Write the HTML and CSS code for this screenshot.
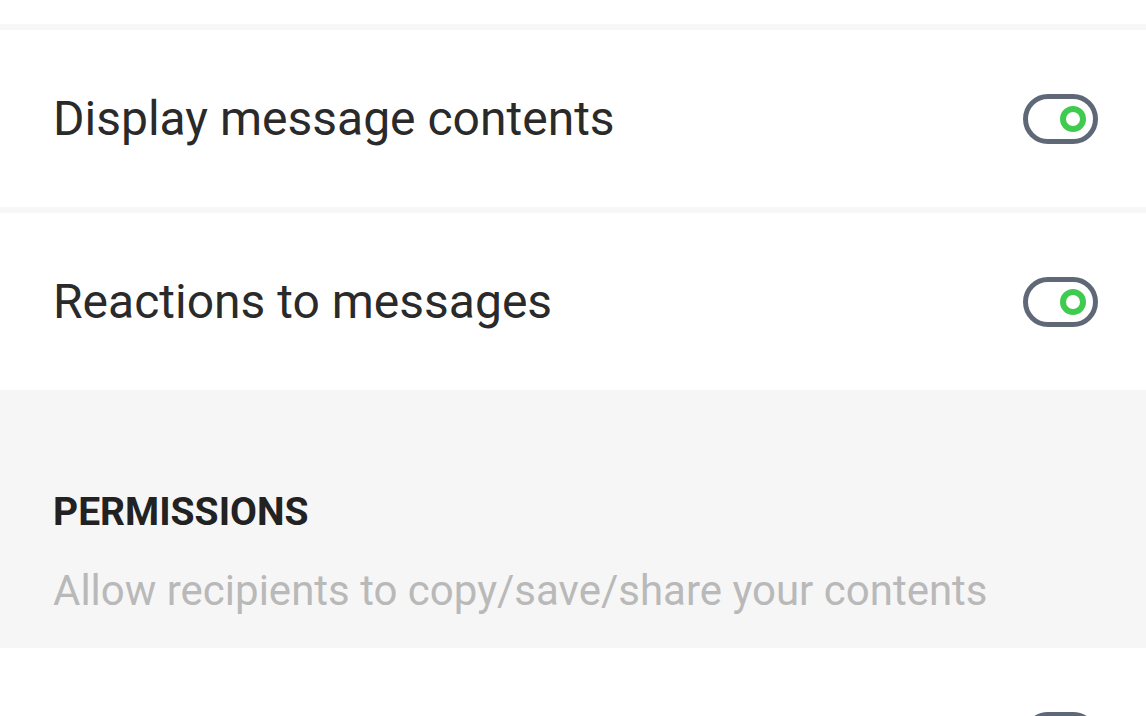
FILE: index.html
```html
<!DOCTYPE html>
<html lang="en">
<head>
  <meta charset="UTF-8">
  <meta name="viewport" content="width=device-width, initial-scale=1.0">
  <title>Notification settings</title>
  <link rel="stylesheet" href="styles.css">
</head>
<body>
  <div class="settings">
    <div class="row row-cut"></div>
    <div class="divider"></div>
    <div class="row">
      <span class="label">Display message contents</span>
      <span class="toggle on"></span>
    </div>
    <div class="divider"></div>
    <div class="row">
      <span class="label">Reactions to messages</span>
      <span class="toggle on"></span>
    </div>
    <div class="section">
      <div class="section-title">PERMISSIONS</div>
      <div class="section-sub">Allow recipients to copy/save/share your contents</div>
    </div>
    <div class="row">
      <span class="label"></span>
      <span class="toggle on"></span>
    </div>
  </div>
</body>
</html>
```

FILE: styles.css
```css
body {
  margin: 0;
  background: #ffffff;
  font-family: Roboto, "Noto Sans", Arial, sans-serif;
  overflow: hidden;
  height: 716px;
}
.settings {
  display: flex;
  flex-direction: column;
}
.row {
  display: flex;
  align-items: center;
  justify-content: space-between;
  height: 177px;
  padding: 0 48px 0 53px;
  flex-shrink: 0;
}
.row-cut {
  height: 24px;
}
.divider {
  height: 6px;
  background: #f7f7f7;
  flex-shrink: 0;
}
.label {
  font-size: 48px;
  color: #2a2a2a;
}
.toggle {
  position: relative;
  width: 75px;
  height: 50px;
  box-sizing: border-box;
  border: 5px solid #5f6877;
  border-radius: 25px;
}
.toggle.on::after {
  content: "";
  position: absolute;
  right: 7px;
  top: 7px;
  width: 26px;
  height: 26px;
  box-sizing: border-box;
  border: 6px solid #3ecb50;
  border-radius: 50%;
  background: #ffffff;
}
.section {
  height: 258px;
  background: #f6f6f6;
  padding: 0 53px 32px;
  box-sizing: border-box;
  flex-shrink: 0;
  display: flex;
  flex-direction: column;
  justify-content: flex-end;
}
.section-title {
  font-size: 39px;
  line-height: 46px;
  font-weight: 700;
  color: #222222;
  margin-bottom: 31px;
}
.section-sub {
  font-size: 42px;
  line-height: 50px;
  color: #b9b9b9;
}
```
